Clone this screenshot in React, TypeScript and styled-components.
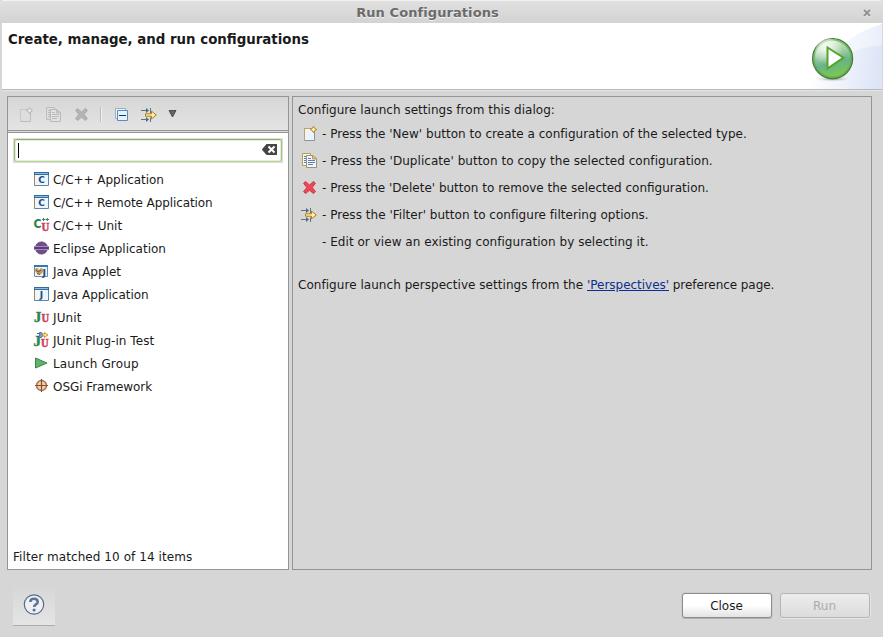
import React from "react";
import styled, { createGlobalStyle } from "styled-components";

const GlobalStyle = createGlobalStyle`
  * { box-sizing: border-box; }
  html, body { margin: 0; padding: 0; }
  body { font: 12px/16px "DejaVu Sans", sans-serif; color: #1a1a1a; background: #d6d6d6; overflow: hidden; }
`;

const Window = styled.div`
  width: 883px;
  height: 637px;
  display: flex;
  flex-direction: column;
  background: #d6d6d6;
  white-space: nowrap;
`;
const TitleBar = styled.header`
  height: 23px;
  flex: none;
  display: grid;
  grid-template-columns: 28px 1fr 28px;
  align-items: center;
  border-top: 1px solid #f2f2f2;
  border-radius: 4px 4px 0 0;
  background: linear-gradient(#e0e0e0, #d3d3d3);
`;
const WindowTitle = styled.h1`
  grid-column: 2;
  margin: 0;
  padding-right: 28px;
  text-align: center;
  font-size: 13px;
  line-height: 21px;
  letter-spacing: 0.08px;
  color: #6b6b6b;
  text-shadow: 0 1px #f3f3f3;
`;
const CloseIcon = styled.svg`
  width: 10px;
  height: 10px;
  margin: 2px 0 0 7px;
`;
const Banner = styled.section`
  height: 66px;
  flex: none;
  margin: 0 1px 0 2px;
  background: #fff;
  display: flex;
  justify-content: space-between;
`;
const BannerTitle = styled.h2`
  margin: 7px 0 0 6px;
  font-size: 13.35px;
  line-height: 19px;
`;
const BannerArt = styled.svg`
  width: 100px;
  height: 66px;
  flex: none;
`;
const Divider = styled.div`
  height: 2px;
  flex: none;
  background: linear-gradient(#b8b8b8 50%, #e6e6e6 50%);
  margin: 0 1px 0 2px;
`;
const Content = styled.main`
  height: 474px;
  flex: none;
  margin: 5px 11px 0 7px;
  display: grid;
  grid-template-columns: 282px 580px;
  gap: 3px;
`;
const Panel = styled.section`
  border: 1px solid #949494;
  display: flex;
  flex-direction: column;
`;
const Toolbar = styled.div`
  height: 36px;
  flex: none;
  display: flex;
  align-items: center;
  padding-left: 9px;
  background: linear-gradient(#d6d6d6, #e4e4e4 33px, #949494 33px, #949494 34px, #dedede 34px, #dedede 35px, #949494 35px);
`;
const ToolButton = styled.span<{ $gap?: number }>`
  display: flex;
  margin-left: ${(p) => p.$gap ?? 0}px;
`;
const Separator = styled.i`
  width: 2px;
  height: 15px;
  margin: 0 0 2px 11px;
  border-left: 1px solid #bcbcbc;
  border-right: 1px solid #f1f1f1;
`;
const TreeArea = styled.div`
  flex: 1;
  display: flex;
  flex-direction: column;
  background: #fff;
  padding: 5px 5px 3px;
`;
const SearchFrame = styled.div`
  background: #dcdcdc;
  padding: 1px;
  height: 25px;
  flex: none;
`;
const Search = styled.div`
  height: 23px;
  border: 1px solid #8fb16c;
  border-bottom-color: #b8d497;
  border-left-color: #9cbb7d;
  border-right-color: #a2c280;
  border-radius: 3px;
  background: #fff;
  box-shadow: inset 0 0 0 1px #e3efd7;
  display: flex;
  justify-content: space-between;
  align-items: center;
  padding: 0 4px 1px 3px;
`;
const Caret = styled.i`
  width: 1px;
  height: 15px;
  margin-top: 1px;
  background: #000;
`;
const Tree = styled.ul`
  list-style: none;
  margin: 5px 0 0;
  padding: 0 0 0 20px;
  flex: 1;
`;
const TreeItem = styled.li<{ $track?: number }>`
  height: 23px;
  display: flex;
  align-items: center;
  gap: 4px;
  letter-spacing: ${(p) => p.$track ?? 0}px;
  & > svg { margin-bottom: 1px; letter-spacing: 0; }
`;
const Status = styled.div`
  line-height: 18px;
  letter-spacing: 0.07px;
`;
const Help = styled.div`
  padding: 5px;
`;
const Line = styled.p`
  margin: 0;
  line-height: 16px;
  letter-spacing: 0.03px;
`;
const Hints = styled.ul`
  list-style: none;
  margin: 2px 0 0;
  padding: 0 0 0 3px;
`;
const Hint = styled.li`
  height: 27px;
  display: grid;
  grid-template-columns: 16px auto;
  justify-content: start;
  gap: 5px;
  align-items: center;
  & > svg { margin-top: 1px; }
`;
const HintText = styled.span<{ $track?: number }>`
  grid-column: 2;
  letter-spacing: ${(p) => p.$track ?? 0}px;
`;
const PerspectiveLine = styled(Line)`
  margin-top: 22px;
  letter-spacing: 0.045px;
`;
const Link = styled.a`
  color: #0a2f91;
  text-decoration: underline;
  letter-spacing: -0.03px;
`;
const LineEnd = styled.span`
  letter-spacing: -0.06px;
`;
const Footer = styled.footer`
  height: 67px;
  flex: none;
  display: flex;
  align-items: flex-start;
  padding: 15px 13px 0 13px;
`;
const HelpButton = styled.button`
  width: 42px;
  height: 41px;
  margin: 0 auto 0 0;
  padding: 0;
  border: 0;
  border-bottom: 1px solid #acacac;
  background: linear-gradient(#d6d6d6, #e5e5e5);
  display: grid;
  place-items: center;
`;
const PushButton = styled.button<{ $quiet?: boolean }>`
  width: 90px;
  height: 25px;
  margin: 8px 0 0 ${(p) => (p.$quiet ? 8 : 0)}px;
  padding: 0 1px 0 0;
  font: inherit;
  color: ${(p) => (p.$quiet ? "#ababab" : "#1a1a1a")};
  border: 1px solid ${(p) => (p.$quiet ? "#b5b5b5" : "#8c8c8c")};
  border-radius: 3px;
  background: ${(p) => (p.$quiet ? "linear-gradient(#ececec, #dcdcdc)" : "linear-gradient(#fff 50%, #e3e3e3)")};
  box-shadow: ${(p) => (p.$quiet ? "0 1px #e8e8e8, 1px 0 #e5e5e5" : "0 1px #b0b0b0, 0 0 0 1px #cccccc")};
`;

type IconName =
  | "new" | "newOff" | "copy" | "copyOff" | "delete" | "deleteOff" | "collapse" | "filter"
  | "cApp" | "cUnit" | "eclipse" | "applet" | "javaApp" | "junit" | "plugin" | "launch" | "osgi";

const Glyph = styled.svg`
  width: 16px;
  height: 16px;
  flex: none;
  display: block;
  overflow: visible;
`;
const Letter = styled.text`
  font-family: "DejaVu Sans", sans-serif;
  font-weight: bold;
`;
const SerifLetter = styled.text`
  font-family: "Liberation Serif", serif;
  font-weight: bold;
  stroke-width: 0.5px;
`;

function AppWindow({ letter }: { letter: string }) {
  return (
    <>
      <path d="M1.5 1.5h14v13h-14z" fill="#eef6fd" stroke="#5c86ad" />
      <path d="M1.5 4v10.5" stroke="#a08b56" />
      <path d="M1 1h15v3H1z" fill="#316b9f" />
      <path d="M2 2h13v1H2z" fill="#8ebbe0" />
      <Letter x="8.5" y="12.3" textAnchor="middle" fontSize="9" fill="#164b83">{letter}</Letter>
    </>
  );
}

function NewPage({ off }: { off?: boolean }) {
  return (
    <>
      <path d="M3.5 2.5h10v12h-10z" fill={off ? "#dedede" : "#eef4ff"} stroke={off ? "#bcbcbc" : "#8a929c"} />
      <path d="M3.5 14V2.5h7" fill="none" stroke={off ? "#c6c6c6" : "#bba661"} />
      <path d="m12.5.3 1.2 2 2 1.2-2 1.2-1.2 2-1.2-2-2-1.2 2-1.2z" fill={off ? "#dadada" : "#ffe681"} stroke={off ? "#b8b8b8" : "#b18519"} />
      <path d="M12.5 2v3m-1.5-1.5h3" stroke={off ? "#ececec" : "#fff5b6"} />
    </>
  );
}

function Pages({ off }: { off?: boolean }) {
  const edge = off ? "#bdbdbd" : "#b49d57";
  const rule = off ? "#bbb" : "#5e80b2";
  return (
    <>
      <path d="M1.5.5h8v12h-8z" fill={off ? "#dedede" : "#f8f7ef"} stroke={edge} />
      <path d="M3 3.5h2m-2 2h2m-2 2h2m-2 2h2" stroke={rule} />
      <path d="M5.5 2.5H12l3.5 3.5v8.5h-10z" fill={off ? "#e2e2e2" : "#f0f5ff"} stroke={off ? "#b8b8b8" : "#9b9272"} />
      <path d="M11.5 2.5V6h4z" fill={off ? "#ccc" : "#e8d18b"} stroke={edge} />
      <path d="M7 5.5h3m-3 2h7m-7 2h7m-7 2h5" stroke={rule} />
    </>
  );
}

function Cross({ off }: { off?: boolean }) {
  return (
    <path
      d="M2.6 3.2 4.6 1.5 8.5 5l3.9-3.5 2 1.7-3.2 4.3 3.2 4-2 2-3.9-3.3-3.9 3.3-2-2 3.2-4z"
      fill={off ? "#b9b2b2" : "#ef4658"}
      stroke={off ? "#aeaaaa" : "#cb3544"}
    />
  );
}

function Icon({ name }: { name: IconName }) {
  const art: Record<IconName, React.ReactNode> = {
    new: <NewPage />,
    newOff: <NewPage off />,
    copy: <Pages />,
    copyOff: <Pages off />,
    delete: <Cross />,
    deleteOff: <Cross off />,
    collapse: (
      <>
        <path d="M1.5 1.5h10v10h-10z" fill="#edf5fd" stroke="#95aec9" />
        <path d="M3.5 3.5h10v10h-10z" fill="#e6f3fe" stroke="#6788ae" />
        <path d="M5 8.5h7" stroke="#073b70" />
      </>
    ),
    filter: (
      <>
        <path d="M0 3.5h7M0 12.5h7M9.5 1v5m0 4.5V15" fill="none" stroke="#58758d" />
        <path d="M5 1v5l3-2.5zM5 10v5l3-2.5z" fill="#4e6b84" />
        <path d="M4.5 6.8h6V4.2L15.3 8l-4.8 3.8V9.2h-6z" fill="#ffefb4" stroke="#b57c0c" />
      </>
    ),
    cApp: <AppWindow letter="C" />,
    javaApp: <AppWindow letter="J" />,
    cUnit: (
      <>
        <Letter x="0.4" y="10.6" fontSize="12" fill="#2b8351" textLength="8" lengthAdjust="spacingAndGlyphs">C</Letter>
        <path d="M9 2.5h3m-1.5-1.5v3m2-1.5h3.5m-1.7-1.5v3" stroke="#33875a" />
        <SerifLetter x="8.4" y="14" fontSize="12.5" fill="#d0405a" stroke="#d0405a" textLength="7.8" lengthAdjust="spacingAndGlyphs">U</SerifLetter>
      </>
    ),
    eclipse: (
      <>
        <circle cx="8.5" cy="8" r="6.2" fill="#704d8a" stroke="#5d4077" strokeWidth=".5" />
        <path d="M1 6.5h15M1 9.5h15" stroke="#a58fba" />
        <path d="M1 8h15" stroke="#5b397b" strokeWidth="1.8" />
      </>
    ),
    applet: (
      <>
        <path d="M1.5 2.5h13v11h-13z" fill="#eaf4fa" stroke="#6c8fa9" />
        <path d="M1 2h14v2H1z" fill="#367aad" />
        <path d="M2 5.5 4.5 5 6 7l2-2 2 1v3l-2.5 2.5-3-.5L2 8z" fill="#c79a5e" />
        <path d="m3 7 2 2 3-2M4 10.5l3 1" fill="none" stroke="#7b5227" />
        <Letter x="9.5" y="12.8" fontSize="9.5" fill="#234a80">J</Letter>
      </>
    ),
    junit: (
      <>
        <SerifLetter x="1" y="12.6" fontSize="14.5" fill="#2d8656" stroke="#2d8656">J</SerifLetter>
        <SerifLetter x="8.4" y="12.6" fontSize="11.5" fill="#d0405a" stroke="#d0405a" textLength="7.6" lengthAdjust="spacingAndGlyphs">U</SerifLetter>
      </>
    ),
    plugin: (
      <>
        <SerifLetter x="0.6" y="14.4" fontSize="15" fill="#2d8656" stroke="#2d8656">J</SerifLetter>
        <SerifLetter x="8" y="14.6" fontSize="11.5" fill="#d0405a" stroke="#d0405a" textLength="7.6" lengthAdjust="spacingAndGlyphs">U</SerifLetter>
        <path d="M4 1.5h3m-3 3h3" stroke="#315f90" />
        <path d="M6.5.5h2l1 1.5v2l-1 1.5h-2z" fill="#729fc9" stroke="#477db0" />
        <path d="M9.5 2h2V.5L15 3l-3.5 2.5V4h-2z" fill="#ffe192" stroke="#b88420" strokeWidth=".8" />
      </>
    ),
    launch: <path d="M2.5 3v10L14 8z" fill="#62b267" stroke="#37864b" />,
    osgi: (
      <>
        <circle cx="8.5" cy="7.5" r="5" fill="#efd0aa" stroke="#a87654" strokeWidth="1.5" />
        <path d="M8.5 1v13M2 7.5h13" stroke="#854e31" strokeWidth="1.2" />
      </>
    ),
  };
  return <Glyph viewBox="0 0 16 16">{art[name]}</Glyph>;
}

const configurations: { icon: IconName; label: string; track?: number }[] = [
  { icon: "cApp", label: "C/C++ Application", track: -0.06 },
  { icon: "cApp", label: "C/C++ Remote Application", track: -0.1 },
  { icon: "cUnit", label: "C/C++ Unit" },
  { icon: "eclipse", label: "Eclipse Application" },
  { icon: "applet", label: "Java Applet" },
  { icon: "javaApp", label: "Java Application", track: -0.04 },
  { icon: "junit", label: "JUnit", track: 0.1 },
  { icon: "plugin", label: "JUnit Plug-in Test", track: 0.05 },
  { icon: "launch", label: "Launch Group", track: 0.16 },
  { icon: "osgi", label: "OSGi Framework", track: -0.06 },
];

const hints: { icon?: IconName; text: string; track?: number }[] = [
  { icon: "new", text: "- Press the 'New' button to create a configuration of the selected type.", track: 0.02 },
  { icon: "copy", text: "- Press the 'Duplicate' button to copy the selected configuration.", track: 0.045 },
  { icon: "delete", text: "- Press the 'Delete' button to remove the selected configuration." },
  { icon: "filter", text: "- Press the 'Filter' button to configure filtering options.", track: 0.03 },
  { text: "- Edit or view an existing configuration by selecting it.", track: 0.04 },
];

export default function App() {
  return (
    <>
      <GlobalStyle />
      <Window>
        <TitleBar>
          <WindowTitle>Run Configurations</WindowTitle>
          <CloseIcon viewBox="0 0 10 10">
            <path d="m2 3 6 6m0-6-6 6" stroke="#f5f5f5" strokeWidth="2" />
            <path d="m2 2 6 6m0-6-6 6" stroke="#929292" strokeWidth="2" />
          </CloseIcon>
        </TitleBar>
        <Banner>
          <BannerTitle>Create, manage, and run configurations</BannerTitle>
          <BannerArt viewBox="0 0 100 66">
            <defs>
              <linearGradient id="sky" x2="1" y2=".1"><stop offset=".15" stopColor="#fff" /><stop offset="1" stopColor="#dde5f7" /></linearGradient>
              <linearGradient id="haze" x2="1" y2=".1"><stop offset=".2" stopColor="#fff" /><stop offset="1" stopColor="#e9effb" /></linearGradient>
              <linearGradient id="orb" x2=".25" y2="1"><stop stopColor="#f1f8ef" /><stop offset=".35" stopColor="#b3d9ae" /><stop offset=".7" stopColor="#68b388" /><stop offset="1" stopColor="#7cc653" /></linearGradient>
              <radialGradient id="gloss" cx=".4" cy=".3" r=".6"><stop stopColor="#fff" stopOpacity=".9" /><stop offset="1" stopColor="#fff" stopOpacity="0" /></radialGradient>
              <radialGradient id="shadow"><stop stopColor="#858585" /><stop offset="1" stopColor="#fff" stopOpacity="0" /></radialGradient>
            </defs>
            <path d="M30 66Q50 15 100 1v65z" fill="url(#haze)" />
            <path d="M22 66Q60 24 100 22v44z" fill="url(#sky)" />
            <ellipse cx="51" cy="56" rx="20" ry="3" fill="url(#shadow)" />
            <circle cx="50.6" cy="35.6" r="20" fill="url(#orb)" stroke="#4a7d38" strokeWidth="1.3" />
            <circle cx="50.6" cy="35.6" r="18.6" fill="none" stroke="#58a84b" strokeWidth="1.4" opacity=".7" />
            <circle cx="47" cy="30" r="14" fill="url(#gloss)" />
            <path d="m45.5 24.5 16 10.2-16 10.8z" fill="#fff" stroke="#55a52a" strokeWidth="2" />
          </BannerArt>
        </Banner>
        <Divider />
        <Content>
          <Panel>
            <Toolbar>
              <ToolButton><Icon name="newOff" /></ToolButton>
              <ToolButton $gap={12}><Icon name="copyOff" /></ToolButton>
              <ToolButton $gap={12}><Icon name="deleteOff" /></ToolButton>
              <Separator />
              <ToolButton $gap={12}><Icon name="collapse" /></ToolButton>
              <ToolButton $gap={11}><Icon name="filter" /></ToolButton>
              <ToolButton $gap={7}>
                <Glyph viewBox="0 0 16 16"><path d="M5 3.5h7L8.5 10z" fill="#666" stroke="#393939" strokeWidth=".8" /></Glyph>
              </ToolButton>
            </Toolbar>
            <TreeArea>
              <SearchFrame>
                <Search>
                  <Caret />
                  <Glyph viewBox="0 0 16 16">
                    <path d="m.8 7.5 4.7-5.5H16v11H5.500z" fill="#454745" />
                    <path d="m7.5 4.5 6 6m0-6-6 6" stroke="#fff" strokeWidth="2" />
                  </Glyph>
                </Search>
              </SearchFrame>
              <Tree>
                {configurations.map((c) => (
                  <TreeItem key={c.label} $track={c.track}><Icon name={c.icon} />{c.label}</TreeItem>
                ))}
              </Tree>
              <Status>Filter matched 10 of 14 items</Status>
            </TreeArea>
          </Panel>
          <Panel>
            <Help>
              <Line>Configure launch settings from this dialog:</Line>
              <Hints>
                {hints.map((h) => (
                  <Hint key={h.text}>
                    {h.icon && <Icon name={h.icon} />}
                    <HintText $track={h.track}>{h.text}</HintText>
                  </Hint>
                ))}
              </Hints>
              <PerspectiveLine>
                Configure launch perspective settings from the <Link>'Perspectives'</Link>
                <LineEnd> preference page.</LineEnd>
              </PerspectiveLine>
            </Help>
          </Panel>
        </Content>
        <Footer>
          <HelpButton>
            <svg width="22" height="22" viewBox="0 0 22 22">
              <circle cx="11" cy="10.5" r="9.7" fill="#f0f0f0" stroke="#536b91" strokeWidth="1.2" />
              <path d="M7.3 8q0-3.3 3.7-3.3T14.7 8q0 1.6-2 2.7-1.5.8-1.5 2.2" fill="none" stroke="#5e7497" strokeWidth="2.6" />
              <circle cx="11.1" cy="16" r="1.6" fill="#5e7497" />
            </svg>
          </HelpButton>
          <PushButton>Close</PushButton>
          <PushButton $quiet disabled>Run</PushButton>
        </Footer>
      </Window>
    </>
  );
}
